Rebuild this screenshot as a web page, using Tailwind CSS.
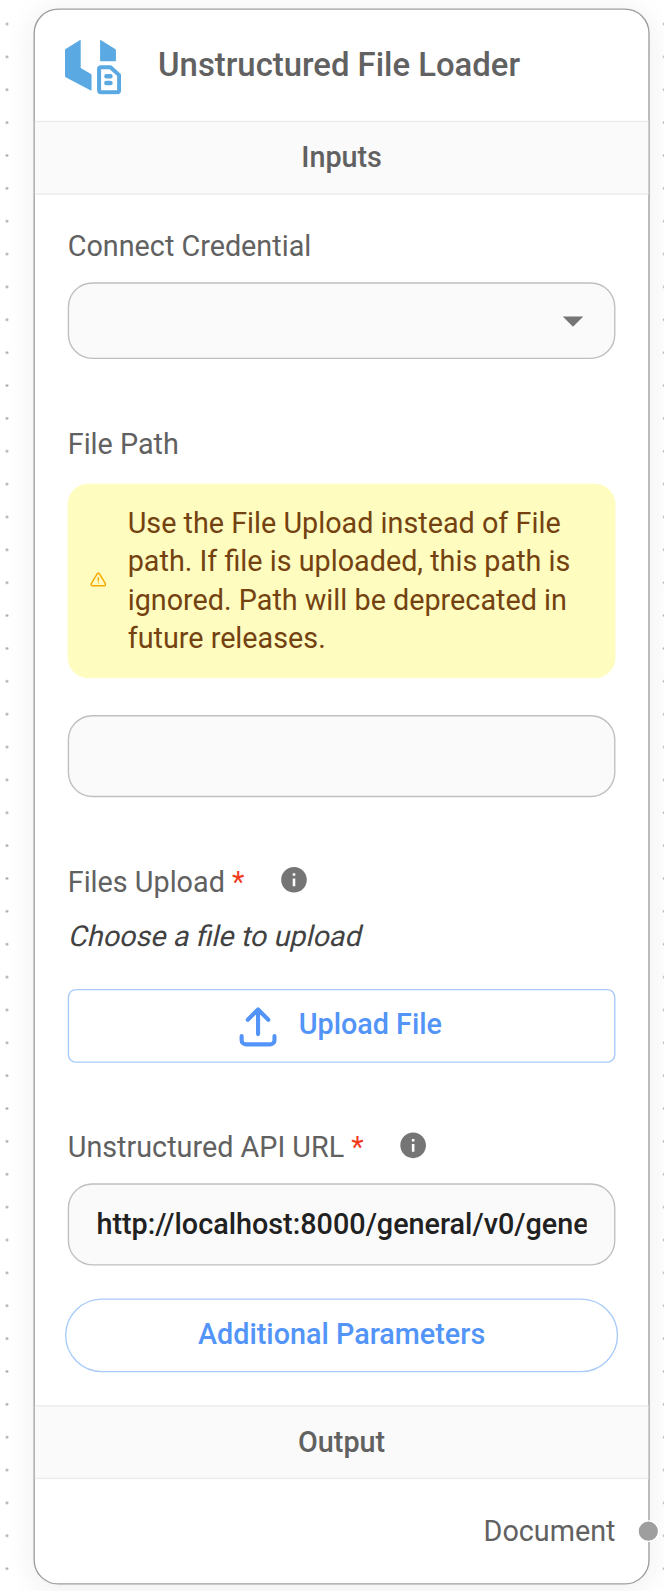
<!DOCTYPE html>
<html lang="en">
<head>
<meta charset="utf-8">
<title>Unstructured File Loader</title>
<script src="https://cdn.jsdelivr.net/npm/@tailwindcss/browser@4"></script>
</head>
<body class="relative h-[1591px] w-[664px] overflow-hidden bg-white font-[Roboto,sans-serif]">
<!-- canvas dots -->
<svg class="absolute inset-0" width="664" height="1591">
  <defs><pattern id="dots" x="-9.43" y="7.57" width="32.865" height="32.865" patternUnits="userSpaceOnUse"><circle cx="16.43" cy="16.43" r="1.2" fill="#999"/></pattern></defs>
  <rect width="664" height="1591" fill="url(#dots)"/>
</svg>

<!-- node card, zoomed on the canvas -->
<main class="absolute left-[33px] top-[8px] flex h-[1150.8px] w-[450px] origin-top-left translate-x-[0.5px] translate-y-[0.5px] scale-[1.3693] flex-col rounded-[18px] border border-[#9e9e9e] bg-white text-[21px] leading-[28px] text-[#616161] shadow-[0_3px_21px_0_rgba(32,40,45,0.08)]">
  <header class="flex h-[81px] shrink-0 items-start pl-[21.9px] pt-[22px]">
    <svg class="h-[39.6px] w-[41px] shrink-0" viewBox="195 120 168 162" fill="#5aa9e3">
      <path d="M239 120.500Q242 119 242 122V204L273 222Q274.500 223 274.500 225V269Q274.500 272 271 270.500L197 231.500Q195 230.500 195 228V150Q195 148 197 147Z"/>
      <path d="M300 122Q300 119 303 121L345 147Q347.500 149 347.500 151V181Q347.500 183.500 345 183.500H302Q300 183.500 300 181Z"/>
      <path d="M303 201.500H331L357 225V270Q357 276 351 276H303Q297 276 297 270V207.500Q297 201.500 303 201.500Z" fill="none" stroke="#5aa9e3" stroke-width="12" stroke-linejoin="round"/>
      <rect x="312.500" y="222" width="25" height="13" rx="6"/><rect x="312.500" y="242" width="25" height="13" rx="6"/>
    </svg>
    <h1 class="ml-[27.1px] mt-[2.3px] whitespace-nowrap text-[24px] font-medium leading-[32px]">Unstructured File Loader</h1>
  </header>
  <h2 class="h-[54px] shrink-0 border-y border-[#ebebeb] bg-[#fafafa] pt-[12px] text-center font-medium">Inputs</h2>

  <section class="flex shrink-0 flex-col px-6">
    <label class="mt-[24px]">Connect Credential</label>
    <div class="mt-[11.7px] flex h-[56.2px] items-center justify-end rounded-[18px] border border-[#bfbfbf] bg-[#fafafa] pr-[12.2px]">
      <svg class="size-9" viewBox="0 0 24 24" fill="#757575"><path d="M7 10l5 5 5-5z"/></svg>
    </div>

    <label class="mt-[48.5px]">File Path</label>
    <div class="mt-[14.4px] flex h-[142px] items-center rounded-[15px] bg-[#fefcbf] px-[15px] text-[#744210]">
      <svg class="ml-[0.8px] size-[12.700px] shrink-0" viewBox="0 0 24 24" fill="none" stroke="#f5a800" stroke-width="2" stroke-linecap="round" stroke-linejoin="round"><path d="M12 9v4M10.363 3.591l-8.106 13.534a1.914 1.914 0 0 0 1.636 2.871h16.214a1.914 1.914 0 0 0 1.636-2.87l-8.106-13.536a1.914 1.914 0 0 0-3.274 0zM12 16h.01"/></svg>
      <p class="ml-[15.300px] whitespace-nowrap">Use the File Upload instead of File<br>path. If file is uploaded, this path is<br>ignored. Path will be deprecated in<br>future releases.</p>
    </div>
    <div class="mt-[27.200px] h-[60px] rounded-[18px] border border-[#bfbfbf] bg-[#fafafa]"></div>

    <div class="mt-[48.3px] flex h-7 items-start">
      <label class="w-[153.700px] shrink-0 whitespace-nowrap">Files Upload <span class="text-[#f23a1c]">*</span></label>
      <svg class="mt-[0.7px] size-[22.500px]" viewBox="0 0 24 24" fill="#757575"><path d="M12 2C6.48 2 2 6.48 2 12s4.48 10 10 10 10-4.48 10-10S17.52 2 12 2zm1 15h-2v-6h2v6zm0-8h-2V7h2v2z"/></svg>
    </div>
    <p class="mt-[11.600px] origin-[0_76%] -skew-x-[13deg] text-[#424242]">Choose a file to upload</p>
    <button class="mt-[23.900px] flex h-[54px] items-center justify-center gap-3 rounded-[6px] border border-[#a8cbfa] font-medium text-[#5294f7]">
      <svg class="-ml-1.5 size-9" viewBox="0 0 24 24" fill="none" stroke="currentColor" stroke-width="2" stroke-linecap="round" stroke-linejoin="round"><path d="M4 17v2a2 2 0 0 0 2 2h12a2 2 0 0 0 2-2v-2M7 9l5-5 5 5M12 4v12"/></svg>
      <span class="-mt-[1.5px]">Upload File</span>
    </button>

    <div class="mt-[47.9px] flex h-7 items-start">
      <label class="w-[240.600px] shrink-0 whitespace-nowrap">Unstructured API URL <span class="text-[#f23a1c]">*</span></label>
      <svg class="mt-px size-[22.500px]" viewBox="0 0 24 24" fill="#757575"><path d="M12 2C6.48 2 2 6.48 2 12s4.48 10 10 10 10-4.48 10-10S17.52 2 12 2zm1 15h-2v-6h2v6zm0-8h-2V7h2v2z"/></svg>
    </div>
    <div class="mt-[12px] h-[60.200px] rounded-[18px] border border-[#bfbfbf] bg-[#fafafa] px-5 pt-[15.3px] font-medium text-[#212121]">
      <div class="overflow-hidden whitespace-nowrap">http://localhost:8000/general/v0/general</div>
    </div>
    <button class="-mx-[2px] mt-[23.800px] h-[54.300px] rounded-full border border-[#a8cbfa] pb-[1.4px] font-medium text-[#5294f7]">Additional Parameters</button>
  </section>

  <h2 class="mt-[23.800px] h-[54.200px] shrink-0 border-y border-[#ebebeb] bg-[#fafafa] pt-[12.600px] text-center font-medium">Output</h2>
  <div class="relative pr-6 pt-[24px] text-right">Document
    <span class="absolute right-[-7.600px] top-[29.700px] size-[16px] rounded-full border-[1.500px] border-white bg-[#9e9e9e]"></span>
  </div>
</main>
</body>
</html>
